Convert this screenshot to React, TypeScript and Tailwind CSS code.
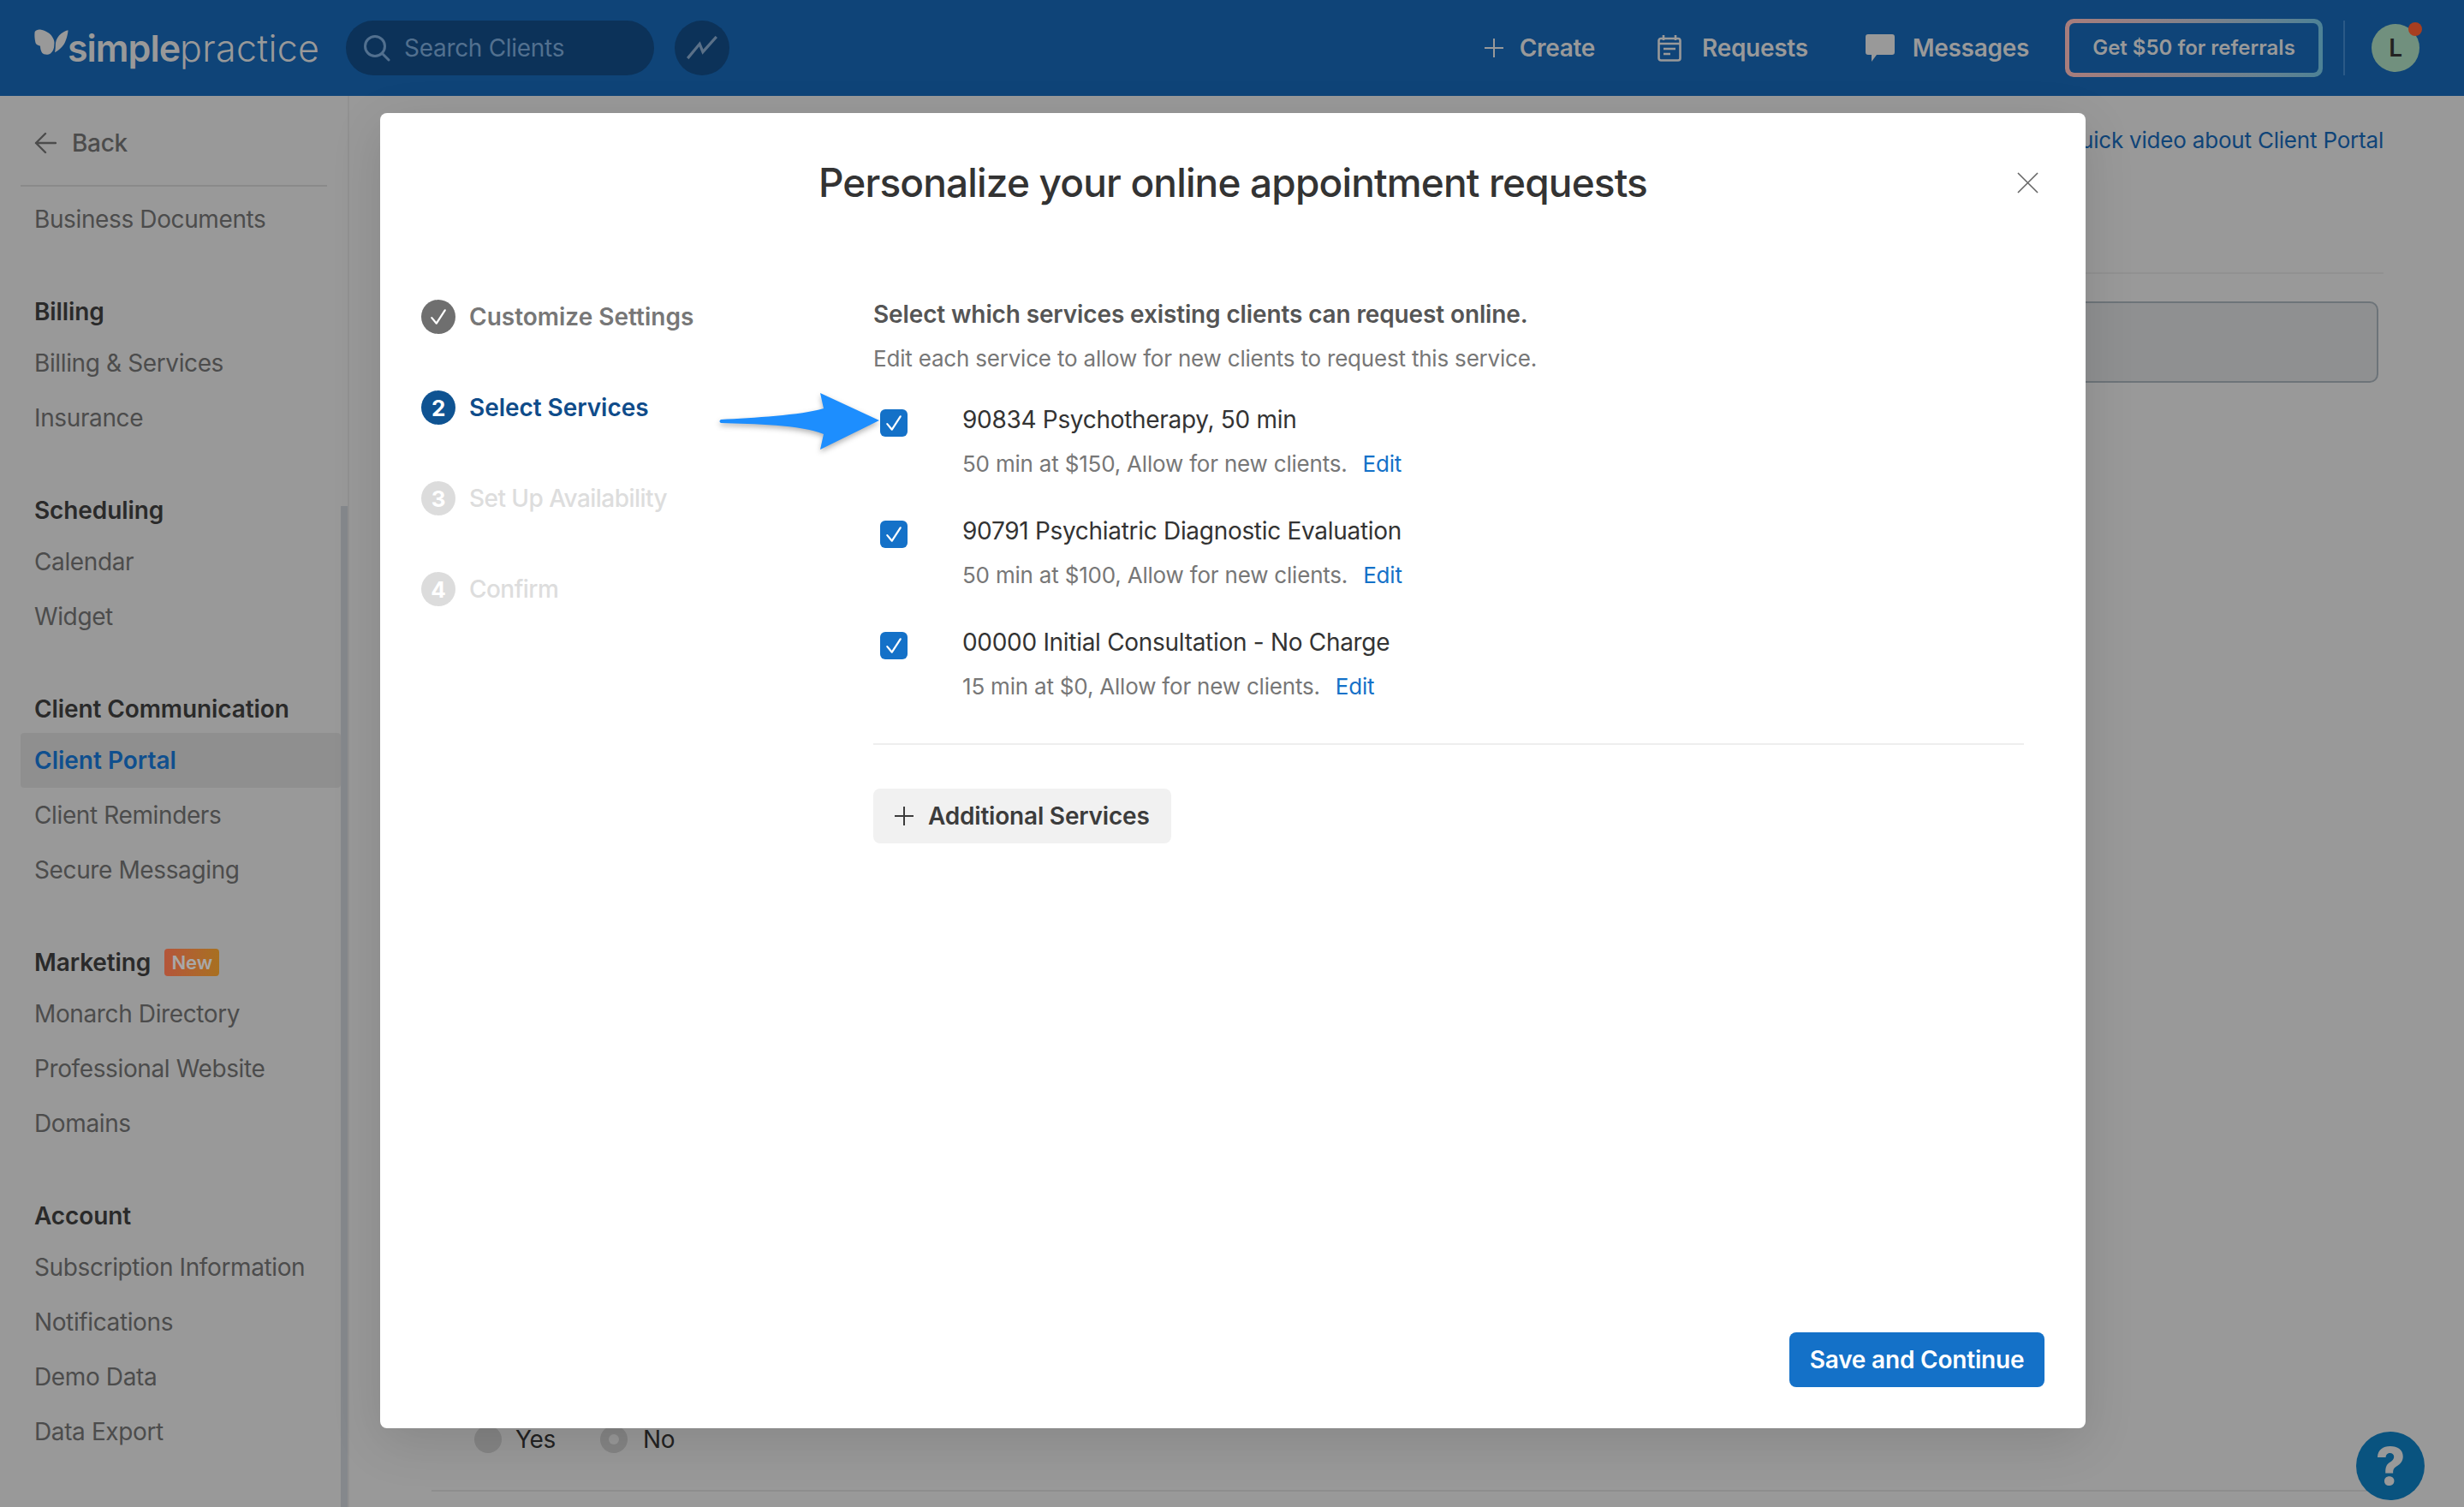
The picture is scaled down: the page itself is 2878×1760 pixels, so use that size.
import React from "react";

const Check = ({ className }: { className: string }) => (
  <svg viewBox="0 0 20 20" className={className} fill="none" stroke="currentColor" strokeWidth="2" strokeLinecap="round" strokeLinejoin="round">
    <path d="M3 11 L8 17 L17 3" />
  </svg>
);

const NavSection = ({ title, items, badge, active }: { title: string; items: string[]; badge?: boolean; active?: string }) => (
  <div className="mt-12 flex flex-col">
    <div className="flex h-14 items-center gap-[16px] pl-4 font-semibold tracking-[-0.1px] text-[#2a2a2a]">
      <span>{title}</span>
      {badge && (
        <span className="flex h-8 w-16 items-center justify-center rounded bg-gradient-to-r from-[#b4553a] to-[#a8701f] text-[22px] font-semibold text-[#a8a8a8]">New</span>
      )}
    </div>
    {items.map((it) => (
      <div key={it} className={it === active ? "flex h-16 items-center rounded bg-[#8f8f8f] pl-4 font-semibold tracking-normal text-[#0f4f8e]" : "flex h-16 items-center pl-4 tracking-[-0.38px] text-[#4c4c4c]"}>
        {it}
      </div>
    ))}
  </div>
);

const Step = ({ n, label, state }: { n: string; label: string; state: "done" | "active" | "todo" }) => {
  const circle = state === "done" ? "bg-[#6f6f6f]" : state === "active" ? "bg-[#0f5392]" : "bg-[#dcdcdc]";
  const text = state === "done" ? "text-[#777777] font-semibold tracking-normal" : state === "active" ? "text-[#0f4c8a] font-semibold tracking-[-0.05px]" : "text-[#dddddd] font-medium tracking-[-0.55px]";
  return (
    <div className="flex h-10 items-center gap-4">
      <span className={`flex h-10 w-10 items-center justify-center rounded-full font-bold text-white ${circle}`}>
        {state === "done" ? <Check className="h-[22px] w-[22px]" /> : <span className="text-[26px]">{n}</span>}
      </span>
      <span className={text}>{label}</span>
    </div>
  );
};

const Service = ({ title, sub }: { title: string; sub: string }) => (
  <div className="flex">
    <span className="ml-2 mt-2 flex h-8 w-8 items-center justify-center rounded-[6px] bg-[#1471c8] text-white">
      <Check className="h-[22px] w-[22px]" />
    </span>
    <div className="ml-16 flex flex-col">
      <div className="flex h-10 items-center text-[#333333]">{title}</div>
      <div className="mt-[11px] flex h-10 items-center gap-[18px] text-[26px] tracking-[-0.2px] text-[#777777]">
        <span>{sub}</span>
        <span className="text-[#1471c8]">Edit</span>
      </div>
    </div>
  </div>
);

export default function App() {
  return (
    <div className="relative flex h-screen w-full flex-col overflow-hidden bg-[#999999] text-[28px] tracking-[-0.3px] [font-family:Inter,sans-serif]">
      <header className="flex h-28 shrink-0 items-center bg-[#0f4478] pl-10 pr-[52px]">
        <div className="flex w-[332px] shrink-0 items-center">
          <svg viewBox="0 0 40 30" className="mb-[14px] h-[30px] w-10 shrink-0" fill="#999999">
            <path d="M0.7 3 C2 1 5 0 8 0.7 C14 2 19 5 21 9 C23 12 24 15 23.3 18 C23.5 22 22 26 19 28.5 C16 30.5 11 30 9 27.5 C7.5 25 7 22 7 19.7 C4 19 2 18 1.5 16 C0.5 12 0 7 0.7 3 Z" />
            <path d="M39.5 1.2 C36 2 32 4 29 7.5 C26 11 24.8 15 24.8 19 C24.8 22 24.5 25 24 27.3 C28 25 32 22 34.5 18 C37 14 39.5 6 39.5 1.2 Z" />
          </svg>
          <span className="-ml-[1px] whitespace-nowrap text-[43px] leading-none text-[#999999]">
            <span className="font-semibold tracking-[-1px]">simple</span>
            <span className="font-light tracking-[0.3px]">practice</span>
          </span>
        </div>
        <div className="ml-8 flex h-16 w-[360px] items-center rounded-full bg-[#0c3259] pl-5 text-[#52708f]">
          <svg viewBox="0 0 32 32" className="h-8 w-8" fill="none" stroke="#52708f" strokeWidth="3" strokeLinecap="round">
            <circle cx="14" cy="14" r="11.5" />
            <path d="M22.5 22.5 L30 30" />
          </svg>
          <span className="ml-4">Search Clients</span>
        </div>
        <div className="ml-6 flex h-16 w-16 items-center justify-center rounded-full bg-[#0c3259]">
          <svg viewBox="0 0 40 30" className="h-[28px] w-10" fill="none" stroke="#5a7088" strokeWidth="3.4" strokeLinejoin="miter">
            <path d="M2 28 L17 10 L21 20 L38 1" />
          </svg>
        </div>
        <div className="ml-auto flex items-center font-semibold tracking-[-0.3px] text-[#999999]">
          <svg viewBox="0 0 22 22" className="h-[22px] w-[22px]" stroke="#999999" strokeWidth="2">
            <path d="M11 0 V22 M0 11 H22" />
          </svg>
          <span className="ml-[19px]">Create</span>
          <svg viewBox="0 0 28 32" className="ml-[73px] h-8 w-7" fill="none" stroke="#999999" strokeWidth="2.6">
            <rect x="1.5" y="5" width="25" height="25.5" rx="2.5" />
            <path d="M7 1 V7 M21 1 V7 M1.5 11 H26.5 M7 17 H21 M7 23 H15" />
          </svg>
          <span className="ml-6">Requests</span>
          <svg viewBox="0 0 34 32" className="ml-[67px] h-8 w-[34px]" fill="#999999">
            <path d="M3 0 H31 a3 3 0 0 1 3 3 V21 a3 3 0 0 1 -3 3 H13 L7 32 V24 H3 a3 3 0 0 1 -3 -3 V3 a3 3 0 0 1 3 -3 Z" />
          </svg>
          <span className="ml-[21px]">Messages</span>
          <div className="ml-[42px] rounded-[10px] bg-gradient-to-r from-[#a87d7c] to-[#4d8296] p-[5px]">
            <div className="flex h-[58px] w-[291px] items-center justify-center rounded-[6px] bg-[#0f4478] text-[24px] tracking-normal">Get $50 for referrals</div>
          </div>
          <div className="ml-6 h-16 w-[2px] bg-[#2b5a87]" />
          <div className="relative ml-[31px] flex h-14 w-14 items-center justify-center rounded-full bg-[#71907e] text-[#222222]">
            L
            <span className="absolute -right-[3px] -top-[2px] h-4 w-4 rounded-full bg-[#a83e20]" />
          </div>
        </div>
      </header>

      <div className="flex min-h-0 flex-1">
        <aside className="relative flex w-[408px] shrink-0 flex-col border-r-2 border-[#919191] pl-6 pr-2">
          <div className="flex h-[104px] flex-col">
            <div className="flex h-[110px] shrink-0 items-center gap-[18px] pl-4 font-medium text-[#4c4c4c]">
              <svg viewBox="0 0 26 26" className="h-[26px] w-[26px]" fill="none" stroke="#4c4c4c" strokeWidth="2.4" strokeLinecap="round" strokeLinejoin="round">
                <path d="M25 13 H2 M13 2 L2 13 L13 24" />
              </svg>
              <span>Back</span>
            </div>
          </div>
          <div className="h-[2px] w-[358px] bg-[#8a8a8a]" />
          <div className="mt-[6px] flex h-16 items-center pl-4 tracking-[-0.38px] text-[#4c4c4c]">Business Documents</div>
          <NavSection title="Billing" items={["Billing & Services", "Insurance"]} />
          <NavSection title="Scheduling" items={["Calendar", "Widget"]} />
          <NavSection title="Client Communication" items={["Client Portal", "Client Reminders", "Secure Messaging"]} active="Client Portal" />
          <NavSection title="Marketing" items={["Monarch Directory", "Professional Website", "Domains"]} badge />
          <NavSection title="Account" items={["Subscription Information", "Notifications", "Demo Data", "Data Export"]} />
          <div className="absolute bottom-0 right-0 h-[1169px] w-2 bg-[#85888c]" />
        </aside>

        <main className="flex min-w-0 flex-1 flex-col pl-24 pr-[94px]">
          <div className="mt-[31px] flex h-10 shrink-0 items-center justify-end text-[26px] tracking-[-0.2px] text-[#0f4478]">Watch a quick video about Client Portal</div>
          <div className="mt-[135px] h-[2px] shrink-0 bg-[#919191]" />
          <div className="mr-[6px] mt-8 h-[95px] shrink-0 rounded-[10px] border-2 border-[#6d7479] bg-[#8f9091]" />
          <div className="mt-auto flex h-8 shrink-0 items-center pl-[50px] text-[#222222]">
            <span className="h-8 w-8 rounded-full bg-[#858585]" />
            <span className="ml-4">Yes</span>
            <span className="ml-[52px] flex h-8 w-8 items-center justify-center rounded-full bg-[#858585]">
              <span className="h-3 w-3 rounded-full bg-[#999999]" />
            </span>
            <span className="ml-[18px]">No</span>
          </div>
          <div className="mb-[18px] mt-[43px] h-[2px] shrink-0 bg-[#8e8e8e]" />
        </main>
      </div>

      <div className="absolute right-[46px] top-[1672px] flex h-20 w-20 items-center justify-center rounded-full bg-[#09537f] text-[60px] font-extrabold text-[#999999]">?</div>

      <div className="absolute left-[444px] top-[132px] flex h-[1536px] w-[1992px] flex-col rounded-[8px] bg-white shadow-[0_16px_60px_rgba(0,0,0,0.12)]">
        <div className="relative flex h-[162px] shrink-0 items-center justify-center text-[46px] font-medium tracking-[-0.85px] text-[#333333]">
          Personalize your online appointment requests
          <svg viewBox="0 0 26 26" className="absolute right-[55px] top-[69px] h-[25px] w-[25px]" stroke="#666666" strokeWidth="1.6">
            <path d="M1 1 L25 25 M25 1 L1 25" />
          </svg>
        </div>
        <div className="flex min-h-0 flex-1">
          <div className="flex w-[576px] shrink-0 flex-col gap-[66px] pl-12 pt-14">
            <Step n="1" label="Customize Settings" state="done" />
            <Step n="2" label="Select Services" state="active" />
            <Step n="3" label="Set Up Availability" state="todo" />
            <Step n="4" label="Confirm" state="todo" />
          </div>
          <div className="relative flex min-w-0 flex-1 flex-col pb-12 pr-12 pt-[53px]">
            <div className="flex h-10 items-center font-semibold tracking-[-0.13px] text-[#555555]">Select which services existing clients can request online.</div>
            <div className="mt-[11px] flex h-10 items-center text-[26px] tracking-[-0.2px] text-[#777777]">Edit each service to allow for new clients to request this service.</div>
            <div className="mt-8 flex flex-col gap-[39px]">
              <Service title="90834 Psychotherapy, 50 min" sub="50 min at $150, Allow for new clients." />
              <Service title="90791 Psychiatric Diagnostic Evaluation" sub="50 min at $100, Allow for new clients." />
              <Service title="00000 Initial Consultation - No Charge" sub="15 min at $0, Allow for new clients." />
            </div>
            <div className="mr-6 mt-[47px] h-[2px] bg-[#eeeeee]" />
            <div className="mt-[51px] flex h-16 w-[348px] items-center rounded-[8px] bg-[#f1f1f1] pl-[25px] font-semibold tracking-[-0.2px] text-[#3c3c3c]">
              <svg viewBox="0 0 22 22" className="h-[22px] w-[22px]" stroke="#3c3c3c" strokeWidth="2">
                <path d="M11 0 V22 M0 11 H22" />
              </svg>
              <span className="ml-[17px]">Additional Services</span>
            </div>
            <div className="mt-auto flex justify-end">
              <div className="flex h-16 w-[298px] items-center justify-center rounded-[8px] bg-[#1471c8] font-semibold tracking-[-0.2px] text-white">Save and Continue</div>
            </div>
          </div>
        </div>
        <svg viewBox="0 0 190 70" className="absolute left-[396px] top-[325px] h-[70px] w-[190px] drop-shadow-[0_3px_3px_rgba(0,0,0,0.3)]" fill="#1d8efe">
          <path d="M2 33 C40 31 95 28 122 20 L118 2 L187 34 L118 68 L122 50 C95 39 40 38 2 37 C0 36 0 34 2 33 Z" />
        </svg>
      </div>
    </div>
  );
}
